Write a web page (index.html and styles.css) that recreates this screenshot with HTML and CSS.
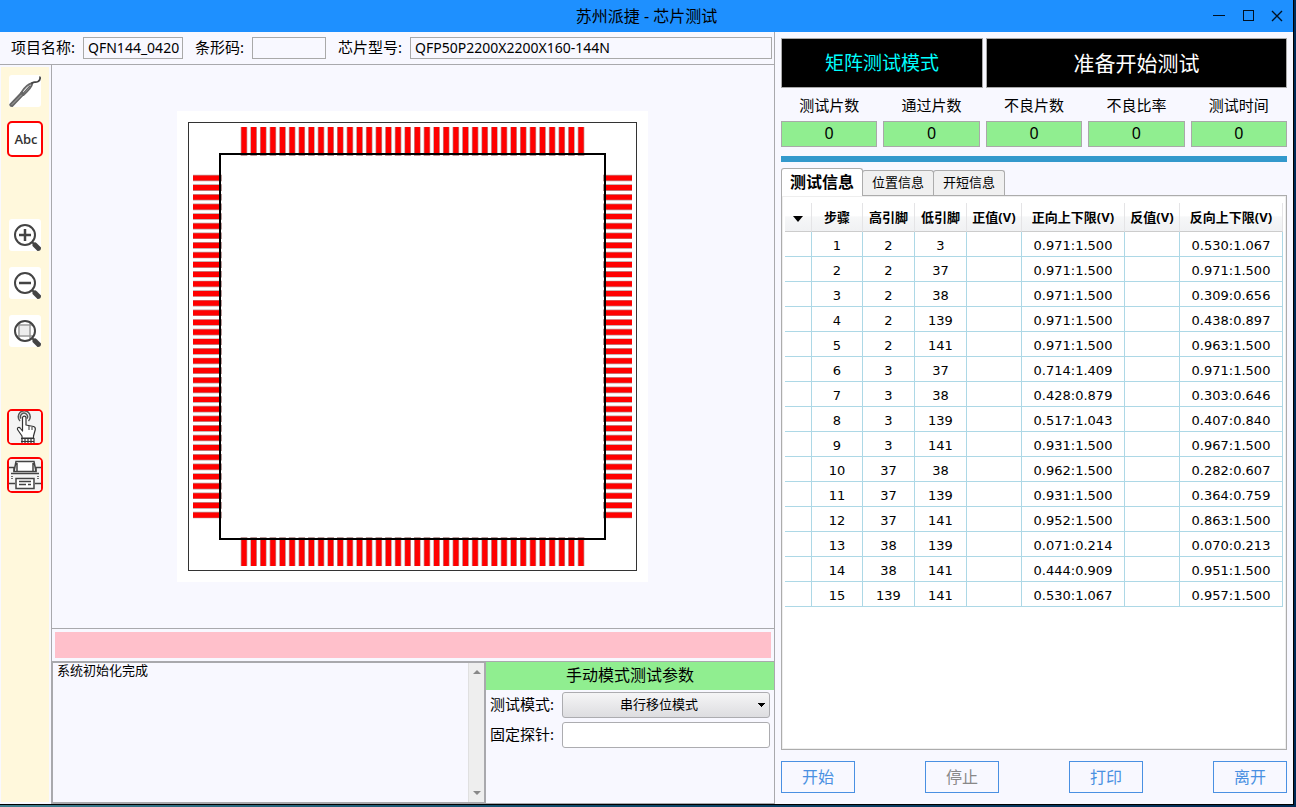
FILE: index.html
```html
<!DOCTYPE html>
<html lang="zh-CN">
<head>
<meta charset="utf-8">
<title>苏州派捷 - 芯片测试</title>
<link rel="stylesheet" href="styles.css">
</head>
<body>
<div class="window">
  <header class="titlebar">
    <h1 class="title">苏州派捷 - 芯片测试</h1>
    <div class="window-controls">
      <button type="button" aria-label="最小化"><svg width="14" height="14" viewBox="0 0 14 14"><path d="M1 6.500h12"/></svg></button>
      <button type="button" aria-label="最大化"><svg width="14" height="14" viewBox="0 0 14 14"><rect x="2.500" y="1.500" width="10" height="10"/></svg></button>
      <button type="button" aria-label="关闭"><svg width="14" height="14" viewBox="0 0 14 14"><path d="M2 2l10 10M12 2l-10 10" stroke-width="1.400"/></svg></button>
    </div>
  </header>
  <div class="content">
    <section class="left">
      <div class="project">
        <label for="name">项目名称:</label><input id="name" class="name" value="QFN144_0420">
        <label for="barcode">条形码:</label><input id="barcode" class="barcode">
        <label for="model">芯片型号:</label><input id="model" class="model" value="QFP50P2200X2200X160-144N">
      </div>
      <div class="work">
        <nav class="toolbar">
          <div class="tools">
            <button type="button" class="tool" aria-label="探针">
              <svg width="32" height="32" viewBox="0 0 32 32" fill="none" stroke="#666" stroke-linecap="round" stroke-linejoin="round">
                <path d="M2.500 30L13 19" stroke-width="4.500"/><path d="M3 29.500L13 19.500" stroke="#aaa" stroke-width="1"/>
                <path d="M12 18C15 13 19 9 23.500 8C23 12 18.500 16.500 14.500 20Z" stroke-width="1.800"/>
                <path d="M15 17.500L21 11" stroke-width="1.500"/>
                <path d="M23 8C26 6 26 8 29 6.500C31.500 5 31.500 4 31 2" stroke-width="1.700" stroke="#444"/>
              </svg>
            </button>
            <button type="button" class="tool on abc">Abc</button>
          </div>
          <div class="tools">
            <button type="button" class="tool" aria-label="放大">
              <svg width="32" height="32" viewBox="0 0 32 32" fill="none" stroke="#444"><circle cx="16" cy="16" r="10" stroke-width="2"/><path d="M10 16h12M16 10v12" stroke-width="2.500"/><path d="M23 23l3 3" stroke-width="2"/><path d="M26 26l4 4" stroke-width="5" stroke-linecap="round"/></svg>
            </button>
            <button type="button" class="tool" aria-label="缩小">
              <svg width="32" height="32" viewBox="0 0 32 32" fill="none" stroke="#444"><circle cx="16" cy="16" r="10" stroke-width="2"/><path d="M10 16h12" stroke-width="2.500"/><path d="M23 23l3 3" stroke-width="2"/><path d="M26 26l4 4" stroke-width="5" stroke-linecap="round"/></svg>
            </button>
            <button type="button" class="tool" aria-label="适合窗口">
              <svg width="32" height="32" viewBox="0 0 32 32" fill="none" stroke="#444"><path d="M8.500 10h15M8.500 21h15M10 8.500v15M21 8.500v15" stroke="#999" stroke-width="1.500"/><rect x="11" y="11" width="9" height="9" fill="#eee" stroke="none"/><circle cx="16" cy="16" r="10" stroke-width="2"/><path d="M23 23l3 3" stroke-width="2"/><path d="M26 26l4 4" stroke-width="5" stroke-linecap="round"/></svg>
            </button>
          </div>
          <div class="tools">
            <button type="button" class="tool on" aria-label="手动测试">
              <svg width="32" height="32" viewBox="0 0 32 32" fill="none" stroke="#333" stroke-width="1.200" stroke-linejoin="round">
                <path fill="#f4f4f4" stroke="none" d="M0 0h32v32H0z"/>
                <path d="M11 10A6 6 0 1 1 19.500 10M12 7.500A3.500 3.500 0 1 1 18 7.500" stroke="#555" stroke-width="1.500"/>
                <path fill="#fff" d="M13.500 20V7C13.500 4.500 17 4.500 17 7V14L24.500 15.500C26 16 26.500 17 26.300 18.500L24.500 25V27H13V25L8.500 18.500C8 16 10.500 16 11.500 17.500Z"/>
                <path d="M20 15v4M23 16v3" stroke-width="1"/>
                <path d="M12 27.500h13M12 30.500h13M13 27v5M16 27v5M19 27v5M22 27v5M25 27v5"/>
              </svg>
            </button>
            <button type="button" class="tool on" aria-label="自动测试">
              <svg width="32" height="32" viewBox="0 0 32 32" fill="none" stroke="#444" stroke-width="1.500">
                <path fill="#f4f4f4" stroke="none" d="M0 0h32v32H0z"/>
                <path fill="#fff" d="M7 2.500h18l2 10H5zM8 13v-9M24 13v-9"/>
                <path d="M0 8.500h5v4M32 8.500h-5v4M2 14.500h28" />
                <path d="M3 17v3M29 17v3" stroke-dasharray="1 1"/>
                <path d="M0 24.500h6M26 24.500h6"/>
                <path fill="#fff" d="M7 19.500h18v10H7z"/>
                <path d="M10 22.500h12M10 25.500h7M19 25.500h3"/>
              </svg>
            </button>
          </div>
        </nav>
        <div class="main">
          <div class="stage">
            <svg class="chip" width="471" height="471" viewBox="0 0 471 471" fill="none">
              <rect width="471" height="471" fill="#fff"/>
              <rect x="11.500" y="11.500" width="448" height="448" stroke="#333"/>
              <g stroke="#b99" stroke-width="29" stroke-dasharray="6.600 3.030">
                <path d="M63.700 30.500H408M63.700 440.500H408M30.500 63.700V408M440.500 63.700V408"/>
              </g>
              <g stroke="#f00" stroke-width="28" stroke-dasharray="5.200 4.430">
                <path d="M64.400 30H407M64.400 441H407M30 64.400V407M441 64.400V407"/>
              </g>
              <rect x="43" y="43" width="385" height="385" stroke="#000" stroke-width="2"/>
            </svg>
          </div>
          <div class="alert-row"><div class="alert"></div></div>
          <div class="bottom">
            <div class="log">
              <textarea class="log-text" aria-label="日志" readonly>系统初始化完成</textarea>
              <div class="scrollbar">
                <svg width="8" height="4" viewBox="0 0 8 4"><path d="M0 4L4 0L8 4z"/></svg>
                <svg width="8" height="4" viewBox="0 0 8 4"><path d="M0 0L4 4L8 0z"/></svg>
              </div>
            </div>
            <div class="params">
              <h2 class="params-title">手动模式测试参数</h2>
              <div class="fields">
                <label for="mode">测试模式:</label>
                <select id="mode"><option>串行移位模式</option></select>
                <label for="probe">固定探针:</label>
                <input id="probe">
              </div>
            </div>
          </div>
        </div>
      </div>
    </section>
    <section class="right">
      <div class="status">
        <div class="status-mode">矩阵测试模式</div>
        <div class="status-state">准备开始测试</div>
      </div>
      <dl class="stats">
        <div><dt>测试片数</dt><dd>0</dd></div>
        <div><dt>通过片数</dt><dd>0</dd></div>
        <div><dt>不良片数</dt><dd>0</dd></div>
        <div><dt>不良比率</dt><dd>0</dd></div>
        <div><dt>测试时间</dt><dd>0</dd></div>
      </dl>
      <div class="divider"></div>
      <div class="tabs">
        <button type="button" class="tab active">测试信息</button>
        <button type="button" class="tab">位置信息</button>
        <button type="button" class="tab">开短信息</button>
      </div>
      <div class="panel">
        <table class="grid">
          <colgroup><col class="c-mark"><col class="c-step"><col class="c-pin"><col class="c-pin"><col class="c-val"><col class="c-range"><col class="c-val"><col class="c-range"></colgroup>
          <thead><tr><th><svg width="10" height="6" viewBox="0 0 10 6"><path d="M0 0h10L5 6z"/></svg></th><th>步骤</th><th>高引脚</th><th>低引脚</th><th>正值(V)</th><th>正向上下限(V)</th><th>反值(V)</th><th>反向上下限(V)</th></tr></thead>
          <tbody>
            <tr><td></td><td>1</td><td>2</td><td>3</td><td></td><td>0.971:1.500</td><td></td><td>0.530:1.067</td></tr>
            <tr><td></td><td>2</td><td>2</td><td>37</td><td></td><td>0.971:1.500</td><td></td><td>0.971:1.500</td></tr>
            <tr><td></td><td>3</td><td>2</td><td>38</td><td></td><td>0.971:1.500</td><td></td><td>0.309:0.656</td></tr>
            <tr><td></td><td>4</td><td>2</td><td>139</td><td></td><td>0.971:1.500</td><td></td><td>0.438:0.897</td></tr>
            <tr><td></td><td>5</td><td>2</td><td>141</td><td></td><td>0.971:1.500</td><td></td><td>0.963:1.500</td></tr>
            <tr><td></td><td>6</td><td>3</td><td>37</td><td></td><td>0.714:1.409</td><td></td><td>0.971:1.500</td></tr>
            <tr><td></td><td>7</td><td>3</td><td>38</td><td></td><td>0.428:0.879</td><td></td><td>0.303:0.646</td></tr>
            <tr><td></td><td>8</td><td>3</td><td>139</td><td></td><td>0.517:1.043</td><td></td><td>0.407:0.840</td></tr>
            <tr><td></td><td>9</td><td>3</td><td>141</td><td></td><td>0.931:1.500</td><td></td><td>0.967:1.500</td></tr>
            <tr><td></td><td>10</td><td>37</td><td>38</td><td></td><td>0.962:1.500</td><td></td><td>0.282:0.607</td></tr>
            <tr><td></td><td>11</td><td>37</td><td>139</td><td></td><td>0.931:1.500</td><td></td><td>0.364:0.759</td></tr>
            <tr><td></td><td>12</td><td>37</td><td>141</td><td></td><td>0.952:1.500</td><td></td><td>0.863:1.500</td></tr>
            <tr><td></td><td>13</td><td>38</td><td>139</td><td></td><td>0.071:0.214</td><td></td><td>0.070:0.213</td></tr>
            <tr><td></td><td>14</td><td>38</td><td>141</td><td></td><td>0.444:0.909</td><td></td><td>0.951:1.500</td></tr>
            <tr><td></td><td>15</td><td>139</td><td>141</td><td></td><td>0.530:1.067</td><td></td><td>0.957:1.500</td></tr>
          </tbody>
        </table>
      </div>
      <div class="actions">
        <button type="button">开始</button>
        <button type="button" disabled>停止</button>
        <button type="button">打印</button>
        <button type="button">离开</button>
      </div>
    </section>
  </div>
</div>
</body>
</html>
```

FILE: styles.css
```css
* { box-sizing: border-box; }
body {
  margin: 0;
  height: 100vh;
  display: flex;
  padding: 0 2px 2px 0;
  overflow: hidden;
  background: linear-gradient(90deg, #3f7f8e, #0f4b6c 45%, #002a55);
  font-family: "Noto Sans", "Noto Sans CJK SC", sans-serif;
  font-size: 15px;
  line-height: 20px;
  color: #000;
}
button, input, select, textarea { font: inherit; color: inherit; border-radius: 0; }
h1, h2, dl, dd { margin: 0; font-weight: 400; }

.window {
  flex: 1;
  min-width: 0;
  display: flex;
  flex-direction: column;
  background: #f8f8ff;
  border: solid #000;
  border-width: 0 1px 1px 0;
}
.titlebar {
  height: 32px;
  display: grid;
  grid-template-columns: 1fr auto 1fr;
  align-items: center;
  padding-bottom: 1px;
  background: #1e90ff;
}
.title { grid-column: 2; font-size: 16px; }
.window-controls { display: flex; justify-content: flex-end; gap: 15px; padding-right: 9px; }
.window-controls button { border: 0; padding: 0; background: none; display: flex; }
.window-controls svg { fill: none; stroke: #012; }

.content {
  flex: 1;
  min-height: 0;
  display: grid;
  grid-template-columns: minmax(0, 1fr) 518px;
}
.left {
  display: flex;
  flex-direction: column;
  min-height: 0;
  border-right: 1px solid #a9a9ad;
}
.project {
  display: flex;
  align-items: center;
  height: 33px;
  padding: 0 2px 0 11px;
  border-bottom: 1px solid #a9a9ad;
}
.project label { margin-right: 8px; padding-bottom: 2px; }
.project input {
  height: 22px;
  min-width: 0;
  padding: 0 0 2px 4px;
  margin-right: 12px;
  font-size: 14px;
  background: none;
  border: 1px solid #a9a9a9;
}
.project .name { width: 100px; }
.project .barcode { width: 74px; }
.project .model { flex: 1; margin-right: 0; }

.work { flex: 1; min-height: 0; display: flex; }
.toolbar {
  width: 48px;
  margin: 2px 2px 2px 1px;
  padding-top: 6px;
  display: flex;
  flex-direction: column;
  align-items: center;
  gap: 60px;
  background: #fff8dc;
}
.tools { display: flex; flex-direction: column; gap: 12px; }
.tool {
  width: 36px;
  height: 36px;
  padding: 0;
  display: flex;
  align-items: center;
  justify-content: center;
  overflow: hidden;
  background: #fff padding-box;
  border: 2px solid transparent;
  border-radius: 5px;
}
.tool.on { border-color: #f00; }
.abc { font-family: "Open Sans", sans-serif; font-size: 13px; font-weight: 600; color: #333; padding-left: 2px; }

.main {
  flex: 1;
  min-width: 0;
  display: flex;
  flex-direction: column;
  border-left: 1px solid #a9a9ad;
}
.stage { flex: 1; min-height: 0; display: flex; align-items: center; justify-content: center; padding-right: 2px; }
.alert-row { padding: 3px; border-top: 1px solid #a9a9ad; border-bottom: 1px solid #a9a9ad; }
.alert { height: 26px; background: #ffc0cb; }
.bottom { height: 142px; display: grid; grid-template-columns: minmax(0, 1fr) 288px; border-bottom: 1px solid #a9a9ad; }
.log { display: flex; border: solid #a9a9ad; border-width: 1px 2px 1px 1px; }
.log-text {
  flex: 1;
  min-width: 0;
  padding: 0 4px;
  font-size: 13px;
  line-height: 15px;
  background: none;
  border: 0;
  resize: none;
}
.scrollbar {
  width: 16px;
  padding: 7px 0;
  display: flex;
  flex-direction: column;
  align-items: center;
  justify-content: space-between;
  background: #eee;
  border-left: 1px solid #e0e0e0;
}
.scrollbar svg { fill: #888; }
.params-title { height: 28px; line-height: 26px; font-size: 16px; text-align: center; background: #90ee90; }
.fields {
  display: grid;
  grid-template-columns: auto 1fr;
  align-items: center;
  gap: 4px 8px;
  padding: 2px 4px;
}
.fields label { padding-bottom: 2px; }
.fields input, .fields select {
  width: 100%;
  height: 26px;
  font-size: 13px;
  border: 1px solid #acacb0;
  border-radius: 3px;
  background: #fff;
}
.fields select {
  appearance: none;
  padding: 0 14px 2px 0;
  text-align-last: center;
  background:
    linear-gradient(to bottom left, #000 50%, transparent 50%) right 7px center / 4px 4px no-repeat,
    linear-gradient(to bottom right, #000 50%, transparent 50%) right 3px center / 4px 4px no-repeat,
    linear-gradient(#f5f5f6, #dddde0);
}

.right { display: flex; flex-direction: column; min-height: 0; padding: 6px 6px 11px; }
.status { display: grid; grid-template-columns: 202fr 301fr; gap: 3px; }
.status div {
  height: 50px;
  display: flex;
  align-items: center;
  justify-content: center;
  background: #000;
  border: 1px solid #a9a9a9;
}
.status-mode { font-size: 19px; color: #0ff; }
.status-state { font-size: 21px; color: #fff; }
.stats { display: grid; grid-template-columns: repeat(5, 1fr); gap: 6px; padding-top: 7px; text-align: center; }
.stats dd {
  height: 26px;
  line-height: 22px;
  margin-top: 6px;
  font-size: 16px;
  background: #90ee90;
  border: 1px solid #a9a9a9;
}
.divider { height: 6px; margin: 9px 0 6px; background: #39c; }
.tabs { display: flex; align-items: flex-end; height: 27px; }
.tab {
  height: 25px;
  padding: 0 9px 2px;
  margin-left: -1px;
  font-size: 13px;
  background: #f0f0f0;
  border: 1px solid #acacac;
  border-bottom: 0;
  border-radius: 3px 3px 0 0;
}
.tab.active {
  height: 28px;
  margin: 0 0 -1px;
  padding: 0 8px 2px;
  font-size: 16px;
  font-weight: 700;
  background: #fff;
  z-index: 1;
}
.panel { flex: 1; min-height: 0; padding: 7px 3px; background: #fff; border: 1px solid #acacac; box-shadow: inset 0 0 0 1px #eee; }
.grid { width: 498px; border-collapse: separate; border-spacing: 0; table-layout: fixed; }
.c-mark { width: 27px; }
.c-step { width: 51px; }
.c-pin { width: 52px; }
.c-val { width: 55px; }
.c-range { width: 103px; }
.grid th, .grid td { padding: 0; text-align: center; white-space: nowrap; }
.grid th {
  height: 29px;
  font-size: 13px;
  border-right: 1px solid #e4e4e6;
  border-bottom: 1px solid #ccc;
  background: linear-gradient(#fff 45%, #f6f7f8 50%, #f0f1f3);
}
.grid td {
  height: 25px;
  padding-top: 3px;
  font: 13px/18px "DejaVu Sans", sans-serif;
  border-right: 1px solid #add8e6;
  border-bottom: 1px solid #add8e6;
}
.actions { display: flex; justify-content: space-between; padding-top: 11px; }
.actions button { width: 74px; height: 32px; padding: 0; font-size: 16px; color: #4a90e2; background: none; border: 1px solid #4a90e2; }
.actions button:disabled { color: #888; }
```
